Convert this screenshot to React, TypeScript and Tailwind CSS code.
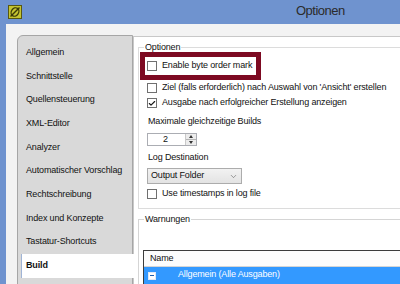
import { Check, ChevronDown } from 'lucide-react';

const navItems = [
    "Allgemein",
    "Schnittstelle",
    "Quellensteuerung",
    "XML-Editor",
    "Analyzer",
    "Automatischer Vorschlag",
    "Rechtschreibung",
    "Index und Konzepte",
    "Tastatur-Shortcuts",
    "Build",
];

function CheckBox({ checked = false }: { checked?: boolean }) {
    return (
        <div className="w-[10px] h-[10px] border border-[#707070] bg-white flex items-center justify-center shrink-0">
            {checked && <Check className="w-[9px] h-[9px] text-[#1a1a1a]" strokeWidth={3.5} />}
        </div>
    );
}

function AppIcon() {
    return (
        <svg width="14" height="14" viewBox="0 0 14 14">
            <rect x="0.5" y="0.5" width="13" height="13" fill="#c4c431" stroke="#58580f" />
            <ellipse cx="7" cy="7" rx="3.6" ry="4.4" transform="rotate(35 7 7)" fill="none" stroke="#3a3a08" strokeWidth="1.3" />
            <line x1="2.5" y1="11.5" x2="11.5" y2="2.5" stroke="#3a3a08" strokeWidth="1.4" />
        </svg>
    );
}

export default function App() {
    return (
        <div className="w-[400px] h-[284px] overflow-hidden bg-[#6f93cf] font-['Liberation_Sans',Arial,sans-serif] text-[9px] tracking-[-0.15px] text-[#111]">
            {/* Title bar */}
            <div className="h-[24px] flex items-center pl-[8px]">
                <AppIcon />
                <span className="ml-[274px] text-[13px] tracking-[-0.5px] text-[#2b2b2b] -mt-[2px]">Optionen</span>
            </div>

            <div className="ml-[6px] w-[394px] h-[260px] bg-[#f3f3f3] flex items-start">
                {/* Left navigation */}
                <div className="mt-[11px] ml-[11px] w-[116px] shrink-0 h-[260px] rounded-tl-[6px] border border-[#a6a6a6] bg-[#d9d9d9] pt-[5px] pl-[3px] relative z-10">
                    {navItems.map((item) => (
                        <div
                            key={item}
                            className={
                                item === "Build"
                                    ? "h-[23.67px] flex items-center pl-[4px] -mr-[3px] bg-white border-l border-[#9fb4d6] font-bold"
                                    : "h-[23.67px] flex items-center pl-[5px]"
                            }
                        >
                            {item}
                        </div>
                    ))}
                </div>

                {/* Content panel */}
                <div className="mt-[12px] w-[267px] shrink-0 h-[260px] bg-white border-l border-t border-[#c8c8c8] overflow-hidden">
                    {/* Optionen group */}
                    <div className="mt-[10px] ml-[4px] w-[400px] border border-[#dcdcdc] relative pt-[4px] pb-[7px]">
                        <span className="absolute -top-[6px] left-[5px] bg-white px-[1px] leading-[10px]">Optionen</span>

                        <div className="ml-[1px] w-[121px] h-[28px] border-[5px] border-[#7d0a22] flex items-center pl-[2px] gap-[5px]">
                            <CheckBox />
                            <span>Enable byte order mark</span>
                        </div>

                        <div className="h-[16px] flex items-center pl-[8px] gap-[5px]">
                            <CheckBox />
                            <span>Ziel (falls erforderlich) nach Auswahl von 'Ansicht' erstellen</span>
                        </div>
                        <div className="h-[14px] flex items-center pl-[8px] gap-[5px]">
                            <CheckBox checked />
                            <span>Ausgabe nach erfolgreicher Erstellung anzeigen</span>
                        </div>

                        <div className="mt-[5px] h-[14px] flex items-center pl-[9px]">Maximale gleichzeitige Builds</div>
                        <div className="mt-[4px] ml-[8px] w-[50px] h-[13px] border border-[#abadb3] flex items-center">
                            <span className="flex-1 text-center pr-[2px]">2</span>
                            <div className="w-[11px] h-full flex flex-col border-l border-[#c9c9c9]">
                                <div className="flex-1 bg-[#ececec] border-b border-[#b5b5b5] flex items-center justify-center">
                                    <div className="w-0 h-0 border-l-[2.5px] border-r-[2.5px] border-b-[3px] border-l-transparent border-r-transparent border-b-[#333]" />
                                </div>
                                <div className="flex-1 bg-[#ececec] flex items-center justify-center">
                                    <div className="w-0 h-0 border-l-[2.5px] border-r-[2.5px] border-t-[3px] border-l-transparent border-r-transparent border-t-[#333]" />
                                </div>
                            </div>
                        </div>

                        <div className="mt-[5px] h-[14px] flex items-center pl-[9px]">Log Destination</div>
                        <div className="mt-[3px] ml-[8px] w-[95px] h-[16px] border border-[#acacac] bg-gradient-to-b from-[#f2f2f2] to-[#e3e3e3] flex items-center pl-[3px] pr-[3px]">
                            <span className="flex-1">Output Folder</span>
                            <ChevronDown className="w-[9px] h-[9px] text-[#555]" strokeWidth={1.5} />
                        </div>

                        <div className="mt-[3px] h-[14px] flex items-center pl-[8px] gap-[5px]">
                            <CheckBox />
                            <span>Use timestamps in log file</span>
                        </div>
                    </div>

                    {/* Warnungen group */}
                    <div className="mt-[10px] ml-[4px] w-[400px] h-[80px] border border-[#d5d5d5] relative pt-[30px] pl-[4px]">
                        <span className="absolute -top-[6px] left-[5px] bg-white px-[1px] leading-[10px]">Warnungen</span>
                        <div className="border border-[#3c3c3c]">
                            <div className="h-[16px] flex items-center pl-[6px] bg-[#fcfcfc] border-b border-[#d5d5d5]">Name</div>
                            <div className="h-[20px] flex items-center bg-[#3399ff] text-white pl-[4px]">
                                <div className="w-[8px] h-[8px] bg-white border border-[#dfe9f7] flex items-center justify-center -mt-[3px]">
                                    <div className="w-[4px] h-[1.5px] bg-[#1e5fb0]" />
                                </div>
                                <span className="ml-[22px] -mt-[4px]">Allgemein (Alle Ausgaben)</span>
                            </div>
                        </div>
                    </div>
                </div>
            </div>
        </div>
    );
}
